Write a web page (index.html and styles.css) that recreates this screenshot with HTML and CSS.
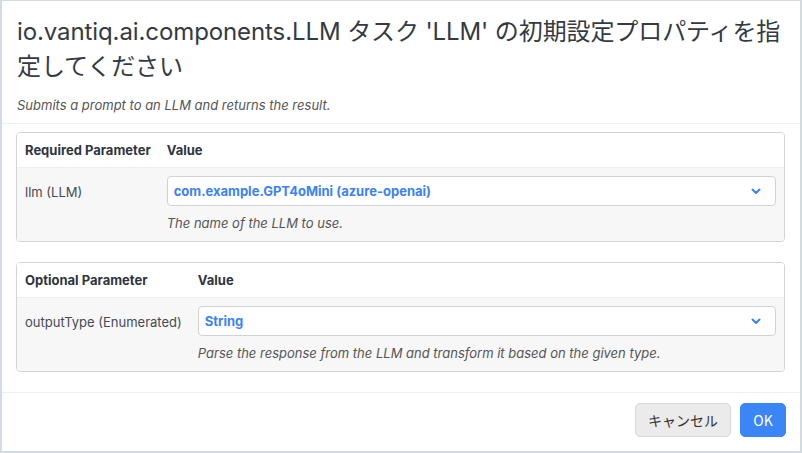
FILE: index.html
```html
<!DOCTYPE html>
<html lang="ja">
<head>
<meta charset="utf-8">
<link rel="stylesheet" href="styles.css">
</head>
<body>
<div class="dialog">
  <div class="head">
    <h1 class="title">io.vantiq.ai.components.LLM タスク 'LLM' の初期設定プロパティを指定してください</h1>
    <p class="subtitle">Submits a prompt to an LLM and returns the result.</p>
  </div>
  <div class="content">
    <div class="card">
      <div class="card-head">
        <div class="cell label">Required Parameter</div>
        <div class="cell">Value</div>
      </div>
      <div class="card-body">
        <div class="cell name">llm (LLM)</div>
        <div class="cell value">
          <div class="select"><span>com.example.GPT4oMini (azure-openai)</span>
            <svg class="chev" width="10" height="7" viewBox="0 0 10 7"><path d="M1.5 1.5 L5 5 L8.5 1.5" fill="none" stroke="#3b82f6" stroke-width="2" stroke-linecap="round" stroke-linejoin="round"/></svg>
          </div>
          <div class="help">The name of the LLM to use.</div>
        </div>
      </div>
    </div>
    <div class="card">
      <div class="card-head">
        <div class="cell label">Optional Parameter</div>
        <div class="cell">Value</div>
      </div>
      <div class="card-body">
        <div class="cell name">outputType (Enumerated)</div>
        <div class="cell value">
          <div class="select"><span>String</span>
            <svg class="chev" width="10" height="7" viewBox="0 0 10 7"><path d="M1.5 1.5 L5 5 L8.5 1.5" fill="none" stroke="#3b82f6" stroke-width="2" stroke-linecap="round" stroke-linejoin="round"/></svg>
          </div>
          <div class="help">Parse the response from the LLM and transform it based on the given type.</div>
        </div>
      </div>
    </div>
  </div>
  <div class="footer">
    <button class="btn cancel">キャンセル</button>
    <button class="btn ok">OK</button>
  </div>
</div>
</body>
</html>
```
FILE: styles.css
```css
* { box-sizing: border-box; }
html, body { margin: 0; padding: 0; background: #fff; }
body {
  font-family: Inter, "Noto Sans CJK JP", sans-serif;
  color: #3a3f47;
}
.dialog {
  width: 802px;
  height: 453px;
  border: 2px solid #d3dae1;
  border-top-width: 1px;
  display: flex;
  flex-direction: column;
}
.head {
  padding: 13px 4px 0 15px;
  border-bottom: 1px solid #eef0f2;
  height: 123px;
}
.title {
  margin: 0;
  font-size: 24px;
  font-weight: 400;
  line-height: 35px;
  color: #343a42;
  letter-spacing: -0.1px;
}
.subtitle {
  margin: 13px 0 0 0;
  font-size: 13px;
  font-style: italic;
  color: #555;
  line-height: 16px;
}
.content {
  padding: 8px 15px 0 14px;
  display: flex;
  flex-direction: column;
  gap: 20px;
  height: 269px;
  border-bottom: 1px solid #eef0f2;
}
.card {
  border: 1px solid #d4d4d4;
  border-radius: 4px;
  display: grid;
  grid-template-columns: auto 1fr;
  overflow: hidden;
}
.card-head, .card-body { display: contents; }
.cell { padding: 0 8px; font-size: 13px; }
.card-head .cell {
  height: 35px;
  display: flex;
  align-items: center;
  font-weight: 700;
  color: #2f3540;
  background: #fff;
  border-bottom: 1px solid #efefef;
}
.card-body .cell { background: #f7f7f7; }
.name {
  padding-top: 16px;
  color: #454a52;
  white-space: nowrap;
  height: 73px;
}
.value { padding-top: 8px; padding-bottom: 8px; }
.select {
  height: 30px;
  background: #fff;
  border: 1px solid #cfd2d6;
  border-radius: 4px;
  display: flex;
  align-items: center;
  justify-content: space-between;
  padding: 0 14px 0 6px;
  color: #3b82f6;
  font-weight: 700;
}
.help {
  margin-top: 9px;
  font-style: italic;
  color: #555;
  font-size: 13px;
  line-height: 16px;
}
.footer {
  flex: 1;
  display: flex;
  justify-content: flex-end;
  align-items: flex-start;
  gap: 9px;
  padding: 10px 14px 0 0;
}
.btn {
  height: 34px;
  border-radius: 5px;
  font-family: "Noto Sans CJK JP", sans-serif;
  font-size: 14px;
  padding: 0 11px;
  cursor: pointer;
}
.cancel {
  background: #ebebeb;
  border: 1px solid #d8d8d8;
  color: #333;
  width: 96px;
}
.ok {
  background: #3b86f6;
  border: 1px solid #3b86f6;
  color: #fff;
  width: 46px;
}
```
